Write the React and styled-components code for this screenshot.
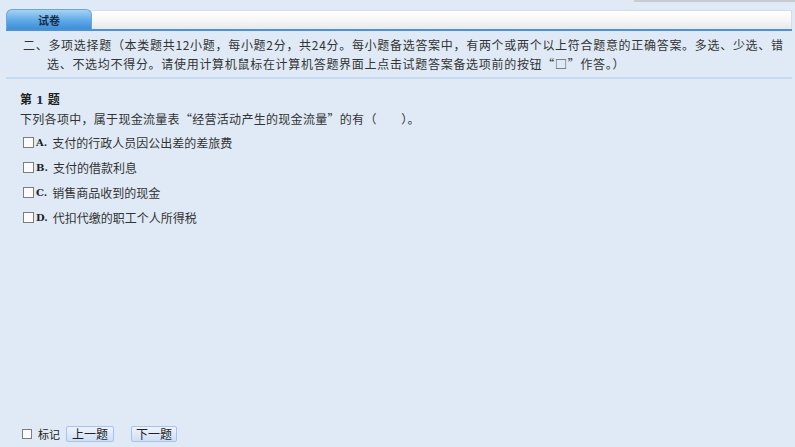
import React from "react";
import styled, { createGlobalStyle } from "styled-components";

const GlobalStyle = createGlobalStyle`
  html, body {
    margin: 0;
    padding: 0;
    background: #dfeaf6;
  }
  body {
    font-family: "Noto Sans CJK SC", "Noto Sans", sans-serif;
    color: #333;
    font-size: 12px;
  }
`;

const Page = styled.div`
  display: flex;
  flex-direction: column;
  height: 100vh;
  padding: 0 3px 0 6px;
  box-sizing: border-box;
`;

const TopStrip = styled.div`
  height: 9px;
  display: flex;
  justify-content: flex-end;
  margin-right: -3px;
`;

const GrayEdge = styled.div`
  width: 161px;
  height: 2px;
  background: #c8cbcf;
`;

const TabBar = styled.div`
  display: flex;
  height: 20px;
  border-bottom: 2px solid #4a93d8;
`;

const Tab = styled.div`
  width: 86px;
  display: flex;
  align-items: center;
  justify-content: center;
  border-radius: 6px 6px 0 0;
  background: linear-gradient(#a6d2f4, #5aa6e6 60%, #3f8fd6);
  color: #15304d;
  font-weight: bold;
  font-size: 11px;
  box-sizing: border-box;
  border: 1px solid #6aa6dc;
  border-bottom: none;
`;

const TabFill = styled.div`
  flex: 1;
  margin-top: 1px;
  background: linear-gradient(#ffffff, #f7f7f7 50%, #e9e9e9);
  border-top: 1px solid #d6dde4;
  border-right: 1px solid #d6dde4;
`;

const Instructions = styled.div`
  padding: 4px 0 4px 41px;
  text-indent: -24px;
  line-height: 19px;
  letter-spacing: 0.7px;
  white-space: nowrap;
  border-bottom: 2px solid #c6daf1;
`;

const Main = styled.div`
  flex: 1;
  padding: 11px 0 0 14px;
`;

const Heading = styled.div`
  font-weight: bold;
  line-height: 18px;
  color: #1d1d1d;
  b {
    font-family: "DejaVu Serif", serif;
    font-size: 11px;
    color: #1c2c55;
    margin: 0 4px;
  }
`;

const Question = styled.div`
  line-height: 18px;
  letter-spacing: 0.3px;
`;

const OptionList = styled.div`
  display: flex;
  flex-direction: column;
  gap: 7px;
  margin-top: 5px;
  padding-left: 3px;
`;

const Option = styled.div`
  display: flex;
  align-items: center;
  height: 18px;
  cursor: pointer;
`;

const Box = styled.span`
  width: ${(p) => p.$size}px;
  height: ${(p) => p.$size}px;
  box-sizing: border-box;
  border: 1px solid #7c7c7c;
  background: #fbfbfb;
  flex-shrink: 0;
`;

const Letter = styled.span`
  font-family: "DejaVu Serif", serif;
  font-weight: bold;
  font-size: 10px;
  color: #1e1e1e;
  margin: 0 5px 0 2px;
`;

const Footer = styled.div`
  display: flex;
  align-items: center;
  height: 20px;
  padding: 0 0 3px 16px;
`;

const Mark = styled.label`
  display: flex;
  align-items: center;
  gap: 6px;
  margin-right: 6px;
  color: #222;
  font-size: 11px;
`;

const NavButton = styled.button`
  height: 16px;
  width: ${(p) => p.$w}px;
  margin-right: ${(p) => p.$mr || 0}px;
  padding: 0;
  font-family: "Noto Sans CJK SC", sans-serif;
  font-size: 12px;
  line-height: 14px;
  color: #222;
  border: 1px solid #a9c3e8;
  border-radius: 2px;
  background: linear-gradient(#edf3fc, #cfdff5);
  cursor: pointer;
`;

const options = [
  ["A", "支付的行政人员因公出差的差旅费"],
  ["B", "支付的借款利息"],
  ["C", "销售商品收到的现金"],
  ["D", "代扣代缴的职工个人所得税"],
];

export default function App() {
  return (
    <>
      <GlobalStyle />
      <Page>
        <TopStrip>
          <GrayEdge />
        </TopStrip>
        <TabBar>
          <Tab>试卷</Tab>
          <TabFill />
        </TabBar>
        <Instructions>
          二、多项选择题（本类题共12小题，每小题2分，共24分。每小题备选答案中，有两个或两个以上符合题意的正确答案。多选、少选、错
          <br />
          选、不选均不得分。请使用计算机鼠标在计算机答题界面上点击试题答案备选项前的按钮“□”作答。）
        </Instructions>
        <Main>
          <Heading>
            第<b>1</b>题
          </Heading>
          <Question>下列各项中，属于现金流量表“经营活动产生的现金流量”的有（　　）。</Question>
          <OptionList>
            {options.map(([k, t]) => (
              <Option key={k}>
                <Box $size={11} />
                <Letter>{k}.</Letter>
                {t}
              </Option>
            ))}
          </OptionList>
        </Main>
        <Footer>
          <Mark>
            <Box $size={10} />
            标记
          </Mark>
          <NavButton $w={48} $mr={17}>上一题</NavButton>
          <NavButton $w={46}>下一题</NavButton>
        </Footer>
      </Page>
    </>
  );
}
